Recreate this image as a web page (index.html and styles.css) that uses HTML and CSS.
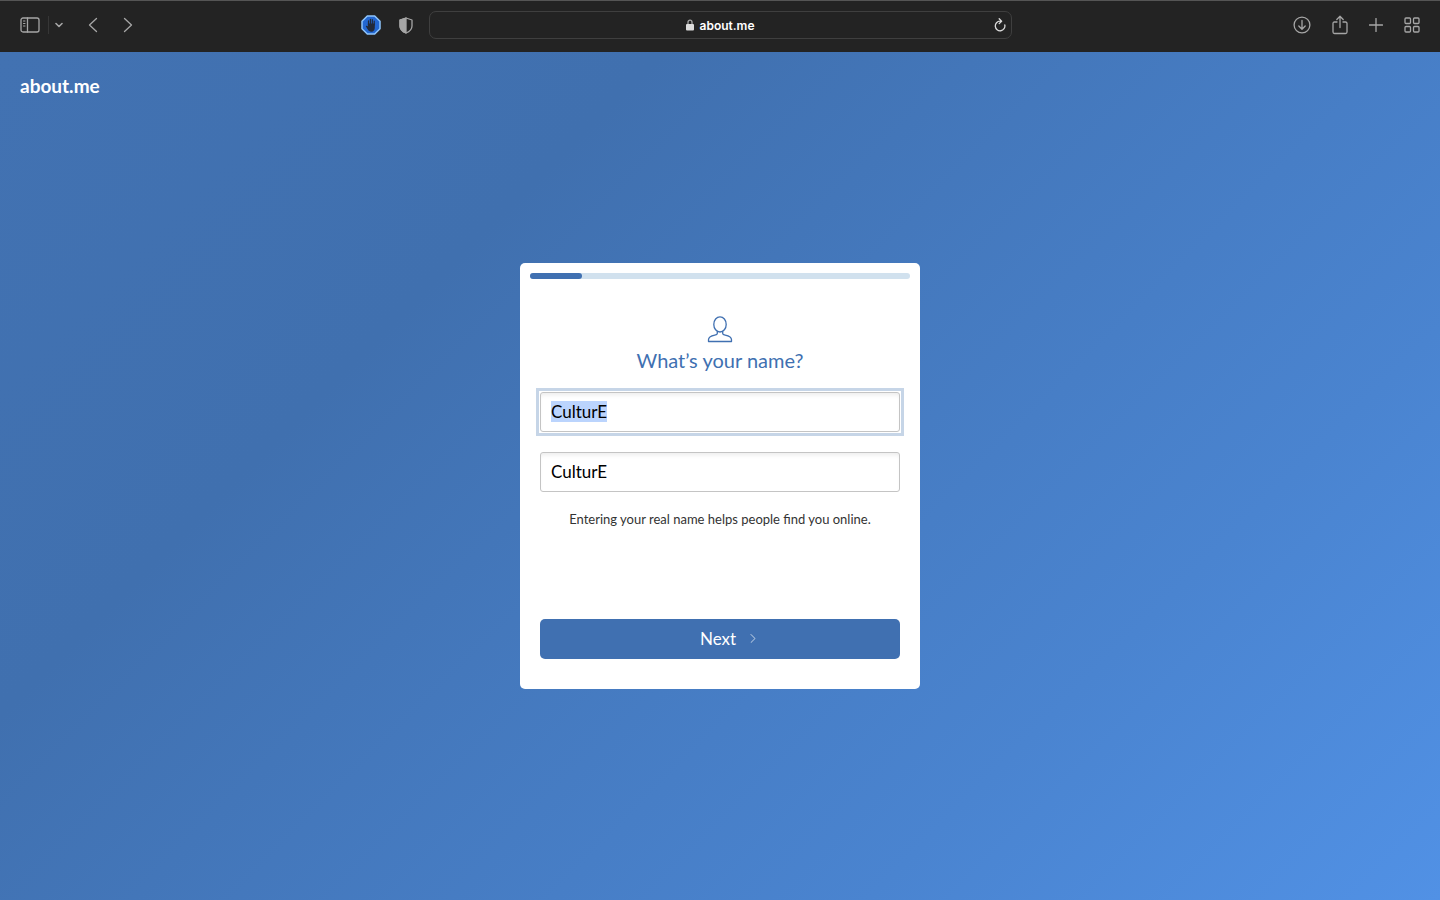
FILE: index.html
```html
<!DOCTYPE html>
<html lang="en">
<head>
    <meta charset="UTF-8">
    <meta name="viewport" content="width=device-width, initial-scale=1.0">
    <title>about.me</title>
    <link rel="stylesheet" href="styles.css">
</head>
<body>
    <!-- Browser toolbar -->
    <header class="toolbar">
        <div class="toolbar-left">
            <div class="nav-buttons">
                <button class="icon-btn" type="button" aria-label="Show sidebar">
                    <svg width="20" height="16" viewBox="0 0 20 16"><rect x="1" y="1" width="18" height="14" rx="2"/><path d="M7.500 1v14"/><path class="thin" d="M3.500 4h1.500M3.500 6.500h1.500M3.500 9h1.500"/></svg>
                </button>
                <span class="divider"></span>
                <button class="icon-btn" type="button" aria-label="Tab groups">
                    <svg class="bold" width="8" height="6" viewBox="0 0 8 6"><path d="M1 1.500l3 3 3-3"/></svg>
                </button>
                <button class="icon-btn arrow" type="button" aria-label="Back">
                    <svg width="10" height="16" viewBox="0 0 10 16"><path d="M8.500 1.500L1.500 8l7 6.500"/></svg>
                </button>
                <button class="icon-btn arrow" type="button" aria-label="Forward">
                    <svg width="10" height="16" viewBox="0 0 10 16"><path d="M1.500 1.500l7 6.500-7 6.500"/></svg>
                </button>
            </div>
            <div class="extensions">
                <button class="icon-btn" type="button" aria-label="Ad blocker">
                    <svg width="20" height="20" viewBox="0 0 20 20">
                        <path d="M6.300 1h7.400L19 6.300v7.400L13.700 19H6.300L1 13.700V6.300z" fill="#2367d1" stroke="#8fc5fb" stroke-width="1.500"/>
                        <path d="M7.500 10V5.800M9.400 9V4.300M11.300 9V4.600M13.200 10V6" stroke="#232a38" stroke-width="1.200"/>
                        <path d="M6.900 8.500h6.900v4.200c0 2.200-1.200 4-3.400 4-1.800 0-2.700-.8-3.600-2.200L4.800 11.300c.6-.8 1.500-.5 2.100.2z" fill="#232a38" stroke="none"/>
                    </svg>
                </button>
                <button class="icon-btn" type="button" aria-label="Privacy report">
                    <svg width="14" height="17" viewBox="0 0 14 17"><path d="M7 1l6 2v6c0 3.400-2.600 5.600-6 7-3.400-1.400-6-3.600-6-7V3z"/><path d="M7 1v15c-3.400-1.400-6-3.600-6-7V3z" fill="#a6a6a6"/></svg>
                </button>
            </div>
        </div>

        <div class="address-bar">
            <span class="address">
                <svg width="8" height="12" viewBox="0 0 8 12"><path d="M2 6V3.200a2 2 0 0 1 4 0V6"/><rect x="0" y="5" width="8" height="6.500" rx="1" fill="#dcdcdc" stroke="none"/></svg>
                about.me
            </span>
            <button class="icon-btn" type="button" aria-label="Reload">
                <svg class="light" width="12" height="14" viewBox="0 0 12 14"><path d="M10.800 7A4.800 4.800 0 1 1 6 3.200h1.500M5.200 .8l2.400 2.400-2.400 2.400"/></svg>
            </button>
        </div>

        <div class="toolbar-right">
            <button class="icon-btn" type="button" aria-label="Downloads">
                <svg width="18" height="18" viewBox="0 0 18 18"><circle cx="9" cy="9" r="7.900"/><path d="M9 4.500v8.500M5.800 10L9 13.200 12.200 10"/></svg>
            </button>
            <button class="icon-btn" type="button" aria-label="Share">
                <svg width="16" height="20" viewBox="0 0 16 20"><path d="M5 7H2.500Q1 7 1 8.500v8.500q0 1.500 1.500 1.500h11q1.500 0 1.500-1.500V8.500Q15 7 13.500 7H11M8 12.500V1.500M4.800 4.500L8 1.300l3.200 3.200"/></svg>
            </button>
            <button class="icon-btn" type="button" aria-label="New tab">
                <svg width="14" height="14" viewBox="0 0 14 14"><path d="M7 .5v13M.5 7h13"/></svg>
            </button>
            <button class="icon-btn" type="button" aria-label="Tab overview">
                <svg width="16" height="16" viewBox="0 0 16 16"><rect x="1" y="1" width="5.500" height="5.500" rx="1"/><rect x="9.500" y="1" width="5.500" height="5.500" rx="1"/><rect x="1" y="9.500" width="5.500" height="5.500" rx="1"/><rect x="9.500" y="9.500" width="5.500" height="5.500" rx="1"/></svg>
            </button>
        </div>
    </header>

    <!-- Sign up page -->
    <main class="page">
        <a class="logo" href="#">about.me</a>

        <form class="card">
            <div class="progress"><div class="progress-bar"></div></div>

            <div class="card-body">
                <svg class="person" width="26" height="28" viewBox="0 0 26 28"><ellipse cx="13" cy="9.400" rx="6.200" ry="7.600"/><path d="M10.300 16.500v2c0 1-1 1.400-2.500 1.700C4 21 1.500 22 1.500 24.700v1.800h23v-1.800c0-2.700-2.500-3.700-6.300-4.500-1.500-.3-2.500-.7-2.500-1.700v-2"/></svg>
                <h1>What’s your name?</h1>
                <div class="field-box">
                    <input class="field" id="firstName" type="text" value="CulturE" aria-label="First name">
                </div>
                <div class="field-box">
                    <input class="field" id="lastName" type="text" value="CulturE" aria-label="Last name">
                </div>
                <p class="hint">Entering your real name helps people find you online.</p>
                <button class="next-btn" type="button">
                    Next
                    <svg width="6" height="10" viewBox="0 0 6 10"><path d="M1 1.500l4 4-4 4"/></svg>
                </button>
            </div>
        </form>
    </main>

    <script>
        // Start with the first name selected
        const firstName = document.getElementById('firstName');
        firstName.focus();
        firstName.select();
    </script>
</body>
</html>
```
FILE: styles.css
```css
* {
    box-sizing: border-box;
}

body {
    margin: 0;
    min-height: 100vh;
    display: flex;
    flex-direction: column;
    font-family: Lato, sans-serif;
}

svg {
    display: block;
    fill: none;
    stroke: #a6a6a6;
    stroke-width: 1.3;
    stroke-linecap: round;
    stroke-linejoin: round;
}

/* Browser toolbar */
.toolbar {
    display: grid;
    grid-template-columns: 1fr minmax(0, 583px) 1fr;
    align-items: center;
    gap: 16px;
    height: 52px;
    padding: 0 20px 3px;
    background-color: #232323;
    border-top: 1px solid #555;
}

.icon-btn {
    padding: 0;
    border: none;
    background: none;
    cursor: pointer;
}

.toolbar-left,
.toolbar-right,
.nav-buttons,
.extensions {
    display: flex;
    align-items: center;
}

.toolbar-left {
    justify-content: space-between;
}

.toolbar-right {
    justify-content: flex-end;
    gap: 21px;
}

.extensions {
    gap: 18px;
}

.divider {
    width: 1px;
    height: 18px;
    margin: 0 6px 0 8px;
    background-color: #363636;
}

.thin {
    stroke-width: 1;
}

.bold {
    stroke-width: 1.6;
}

.light {
    stroke: #dcdcdc;
}

.arrow {
    margin-left: 25px;
}

.address-bar {
    display: flex;
    align-items: center;
    height: 28px;
    padding: 0 5px;
    border: 1px solid #3f3f3f;
    border-radius: 7px;
}

.address {
    flex: 1;
    display: flex;
    align-items: center;
    justify-content: center;
    gap: 6px;
    padding-left: 12px;
    color: #fff;
    font: 600 12px Inter, sans-serif;
}

/* Page background */
.page {
    flex: 1;
    display: grid;
    grid-template-rows: 1fr auto 1fr;
    justify-items: center;
    background: linear-gradient(135deg, #4272b2 0%, #4070af 29%, #4a84d0 75%, #5191e5 100%);
}

.logo {
    justify-self: start;
    align-self: start;
    padding: 22px 20px;
    color: #fff;
    font-size: 19px;
    font-weight: bold;
    line-height: 24px;
    text-decoration: none;
}

/* Name card */
.card {
    width: 100%;
    max-width: 400px;
    padding: 10px;
    border-radius: 5px;
    background-color: #fff;
}

.progress {
    height: 6px;
    border-radius: 3px;
    background-color: #d1e1ee;
}

.progress-bar {
    width: 52px;
    height: 100%;
    border-radius: 3px;
    background-color: #4070b1;
}

.card-body {
    display: flex;
    flex-direction: column;
    align-items: center;
    padding: 36px 10px 20px;
}

.person {
    stroke: #4070b1;
}

h1 {
    margin: 4px 0 19px;
    color: #4070b1;
    font-size: 20px;
    font-weight: normal;
    line-height: 26px;
}

.field-box {
    width: 100%;
    margin-bottom: 20px;
}

.field-box:focus-within {
    outline: 3px solid #c6d5e7;
    outline-offset: 1px;
}

.field {
    display: block;
    width: 100%;
    height: 40px;
    padding: 0 10px 2px;
    border: 1px solid #c4c4c4;
    border-radius: 3px;
    outline: none;
    box-shadow: inset 0 4px 4px -2px #ececec;
    color: #000;
    font-family: Lato, sans-serif;
    font-size: 17px;
    line-height: 23px;
}

.field::selection {
    background-color: #bbd4fd;
    color: #000;
}

.hint {
    margin: 0 0 92px;
    color: #333;
    font-size: 13px;
    line-height: 15px;
}

.next-btn {
    display: flex;
    align-items: center;
    justify-content: center;
    gap: 14px;
    width: 100%;
    height: 40px;
    padding: 0 0 2px 16px;
    border: none;
    border-radius: 5px;
    background-color: #4070b1;
    color: #fff;
    font-family: Lato, sans-serif;
    font-size: 17px;
    cursor: pointer;
}

.next-btn svg {
    stroke: #c6d5e7;
    stroke-width: 1;
}
```
